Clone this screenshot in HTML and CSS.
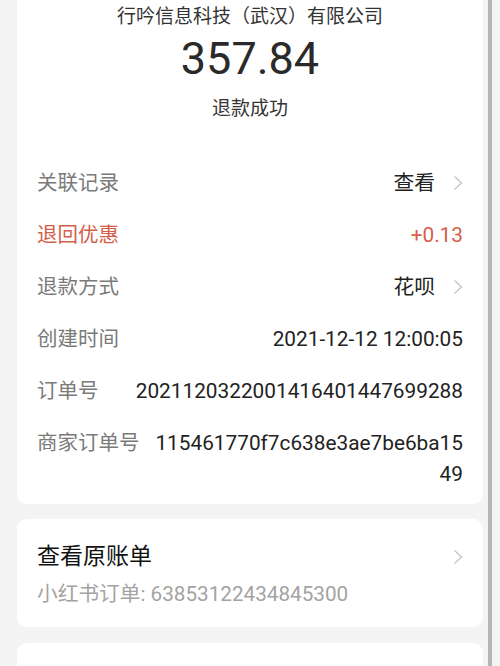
FILE: index.html
```html
<!DOCTYPE html>
<html lang="zh-CN">
<head>
    <meta charset="UTF-8">
    <meta name="viewport" content="width=device-width, initial-scale=1.0">
    <title>账单详情</title>
    <link rel="stylesheet" href="styles.css">
</head>
<body>
    <div class="screen">
        <main class="content">
            <section class="card detail">
                <div class="summary">
                    <div class="merchant">行吟信息科技（武汉）有限公司</div>
                    <div class="amount">357.84</div>
                    <div class="status">退款成功</div>
                </div>

                <div class="row">
                    <span class="label">关联记录</span>
                    <span class="value">查看</span>
                    <svg class="chevron" viewBox="0 0 10 16"><path d="M1.5 1.5 L8.5 8 L1.5 14.5"/></svg>
                </div>
                <div class="row promo">
                    <span class="label">退回优惠</span>
                    <span class="value">+0.13</span>
                </div>
                <div class="row">
                    <span class="label">退款方式</span>
                    <span class="value">花呗</span>
                    <svg class="chevron" viewBox="0 0 10 16"><path d="M1.5 1.5 L8.5 8 L1.5 14.5"/></svg>
                </div>
                <div class="row">
                    <span class="label">创建时间</span>
                    <span class="value">2021-12-12 12:00:05</span>
                </div>
                <div class="row">
                    <span class="label">订单号</span>
                    <span class="value">2021120322001416401447699288</span>
                </div>
                <div class="row">
                    <span class="label">商家订单号</span>
                    <span class="value">115461770f7c638e3ae7be6ba1549</span>
                </div>
            </section>

            <section class="card bill">
                <div class="bill-text">
                    <div class="bill-title">查看原账单</div>
                    <div class="bill-sub">小红书订单: 63853122434845300</div>
                </div>
                <svg class="chevron" viewBox="0 0 10 16"><path d="M1.5 1.5 L8.5 8 L1.5 14.5"/></svg>
            </section>

            <section class="card next"></section>
        </main>
        <div class="rail"></div>
    </div>
</body>
</html>
```

FILE: styles.css
```css
html, body {
    margin: 0;
    height: 100%;
    overflow: hidden;
}
body {
    font-family: Roboto, "Noto Sans CJK SC", sans-serif;
    background: #f4f4f4;
    color: #222;
}
.screen {
    display: grid;
    grid-template-columns: 488px 4px 1fr;
    height: 666px;
}
.content {
    padding: 0 5px 0 17px;
}
/* grey strip down the right side of the screenshot */
.rail {
    background: #b5b5b5;
    height: 666px;
}
.card {
    background: #fff;
    border-radius: 10px;
    margin-bottom: 15px;
}
.detail {
    border-radius: 0 0 10px 10px;
    padding: 3px 20px 4px;
}
.summary {
    text-align: center;
    padding-bottom: 34px;
}
.merchant {
    font-size: 19px;
    line-height: 28px;
    color: #333;
}
.amount {
    font-size: 45px;
    line-height: 56px;
    color: #2a2a2a;
}
.status {
    margin-top: 8px;
    font-size: 19px;
    line-height: 28px;
    color: #333;
}
.row {
    display: flex;
    align-items: flex-start;
    padding: 10.5px 0;
    font-size: 20.5px;
    line-height: 31px;
}
.label {
    flex: none;
    color: #7a7a7a;
    margin-right: 12px;
}
.value {
    flex: 1;
    text-align: right;
    word-break: break-all;
    font-size: 20.8px;
    color: #222;
}
.promo .label,
.promo .value {
    color: #d4604a;
}
.chevron {
    flex: none;
    width: 10px;
    height: 16px;
    margin: 7px 0 0 18px;
    fill: none;
    stroke: #c6c6c6;
    stroke-width: 1.4;
}
.bill {
    display: flex;
    align-items: flex-start;
    padding: 22px 20px 19px;
}
.bill-text {
    flex: 1;
}
.bill-title {
    font-size: 23px;
    line-height: 32px;
    color: #111;
}
.bill-sub {
    margin-top: 7px;
    font-size: 20.7px;
    line-height: 28px;
    color: #a3a3a3;
}
.bill .chevron {
    margin-top: 8px;
}
.next {
    height: 60px;
    margin-top: 16px;
}
```
